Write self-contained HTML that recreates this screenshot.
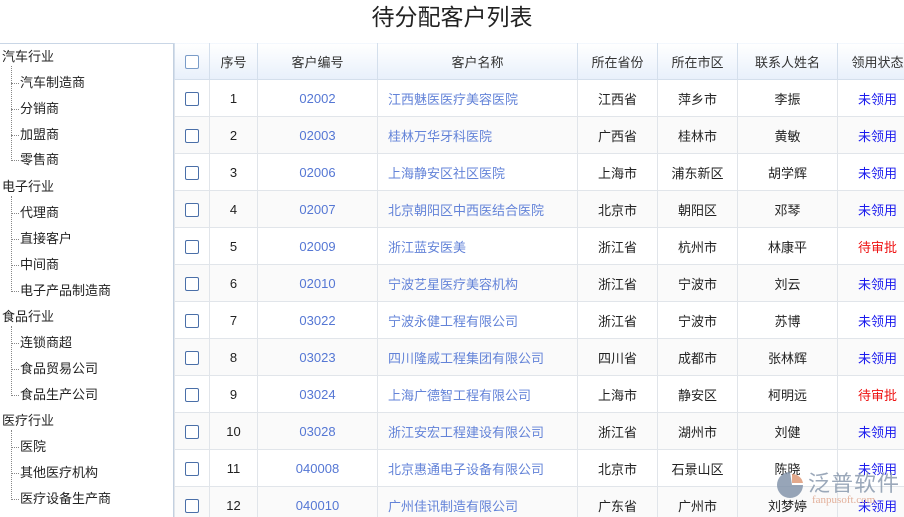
<!DOCTYPE html>
<html><head><meta charset="utf-8"><style>
*{margin:0;padding:0;box-sizing:border-box}
body{width:904px;height:517px;overflow:hidden;background:#fff;font-family:"Liberation Sans","Noto Sans CJK SC",sans-serif;font-size:13px;color:#222;position:relative}
.title{position:absolute;top:0;left:0;width:904px;text-align:center;font-size:23px;line-height:34px;color:#222}
.topline{position:absolute;top:43px;left:0;width:904px;height:1px;background:#c9d6e6}
.tree{position:absolute;left:0;top:44px;width:173px}
.t{position:absolute;white-space:nowrap;line-height:16px}
.vl{position:absolute;left:11px;border-left:1px dotted #888;width:0}
.hl{position:absolute;left:11px;width:8px;border-top:1px dotted #888;height:0}
.sep{position:absolute;left:173px;top:44px;width:1px;height:473px;background:#c3d0e0}
.wrap{position:absolute;left:174px;top:43px;width:730px;height:474px;overflow:hidden}
table{border-collapse:collapse;table-layout:fixed;width:743px;margin-top:-1px}
td,th{border:1px solid #e1e5ea;text-align:center;height:37px;padding:0;font-weight:normal;white-space:nowrap;overflow:hidden}
th{background:linear-gradient(#fff,#e8f0fb);border-color:#d4dfec;color:#333}
tr:nth-child(odd) td{background:#fafafa}
.cb{display:inline-block;width:14px;height:14px;border:1px solid #4a6fa8;border-radius:2px;vertical-align:middle;background:#fff}
th .cb{border-color:#7a9cc8}
.c{color:#5577d4}
.n{color:#6383d8;text-align:left;padding-left:10px}
.b{color:#1a1aee}
.r{color:#ee1111}
.logo{position:absolute;left:808px;top:466px;font-size:22px;color:#8a9aae;opacity:.85;letter-spacing:1px}
.logo2{position:absolute;left:812px;top:494px;font-size:11px;color:#e0a890;font-family:"Liberation Serif",serif;opacity:.9}
</style></head><body>
<div class="title">待分配客户列表</div>
<div class="topline"></div>
<div class="tree">
<div class="t" style="left:2px;top:5px">汽车行业</div>
<div class="vl" style="top:22px;height:95px"></div>
<div class="hl" style="top:39px"></div><div class="t" style="left:20px;top:31px">汽车制造商</div>
<div class="hl" style="top:65px"></div><div class="t" style="left:20px;top:57px">分销商</div>
<div class="hl" style="top:91px"></div><div class="t" style="left:20px;top:83px">加盟商</div>
<div class="hl" style="top:116px"></div><div class="t" style="left:20px;top:108px">零售商</div>
<div class="t" style="left:2px;top:135px">电子行业</div>
<div class="vl" style="top:152px;height:96px"></div>
<div class="hl" style="top:169px"></div><div class="t" style="left:20px;top:161px">代理商</div>
<div class="hl" style="top:195px"></div><div class="t" style="left:20px;top:187px">直接客户</div>
<div class="hl" style="top:221px"></div><div class="t" style="left:20px;top:213px">中间商</div>
<div class="hl" style="top:247px"></div><div class="t" style="left:20px;top:239px">电子产品制造商</div>
<div class="t" style="left:2px;top:265px">食品行业</div>
<div class="vl" style="top:282px;height:70px"></div>
<div class="hl" style="top:299px"></div><div class="t" style="left:20px;top:291px">连锁商超</div>
<div class="hl" style="top:325px"></div><div class="t" style="left:20px;top:317px">食品贸易公司</div>
<div class="hl" style="top:351px"></div><div class="t" style="left:20px;top:343px">食品生产公司</div>
<div class="t" style="left:2px;top:369px">医疗行业</div>
<div class="vl" style="top:386px;height:70px"></div>
<div class="hl" style="top:403px"></div><div class="t" style="left:20px;top:395px">医院</div>
<div class="hl" style="top:429px"></div><div class="t" style="left:20px;top:421px">其他医疗机构</div>
<div class="hl" style="top:455px"></div><div class="t" style="left:20px;top:447px">医疗设备生产商</div>
</div>
<div class="sep"></div>
<div class="wrap">
<table>
<colgroup><col style="width:35px"><col style="width:48px"><col style="width:120px"><col style="width:200px"><col style="width:80px"><col style="width:80px"><col style="width:100px"><col style="width:80px"></colgroup>
<tr><th><span class="cb"></span></th><th>序号</th><th>客户编号</th><th>客户名称</th><th>所在省份</th><th>所在市区</th><th>联系人姓名</th><th>领用状态</th></tr>
<tr><td><span class="cb"></span></td><td>1</td><td class="c">02002</td><td class="n">江西魅医医疗美容医院</td><td>江西省</td><td>萍乡市</td><td>李振</td><td class="b">未领用</td></tr>
<tr><td><span class="cb"></span></td><td>2</td><td class="c">02003</td><td class="n">桂林万华牙科医院</td><td>广西省</td><td>桂林市</td><td>黄敏</td><td class="b">未领用</td></tr>
<tr><td><span class="cb"></span></td><td>3</td><td class="c">02006</td><td class="n">上海静安区社区医院</td><td>上海市</td><td>浦东新区</td><td>胡学辉</td><td class="b">未领用</td></tr>
<tr><td><span class="cb"></span></td><td>4</td><td class="c">02007</td><td class="n">北京朝阳区中西医结合医院</td><td>北京市</td><td>朝阳区</td><td>邓琴</td><td class="b">未领用</td></tr>
<tr><td><span class="cb"></span></td><td>5</td><td class="c">02009</td><td class="n">浙江蓝安医美</td><td>浙江省</td><td>杭州市</td><td>林康平</td><td class="r">待审批</td></tr>
<tr><td><span class="cb"></span></td><td>6</td><td class="c">02010</td><td class="n">宁波艺星医疗美容机构</td><td>浙江省</td><td>宁波市</td><td>刘云</td><td class="b">未领用</td></tr>
<tr><td><span class="cb"></span></td><td>7</td><td class="c">03022</td><td class="n">宁波永健工程有限公司</td><td>浙江省</td><td>宁波市</td><td>苏博</td><td class="b">未领用</td></tr>
<tr><td><span class="cb"></span></td><td>8</td><td class="c">03023</td><td class="n">四川隆威工程集团有限公司</td><td>四川省</td><td>成都市</td><td>张林辉</td><td class="b">未领用</td></tr>
<tr><td><span class="cb"></span></td><td>9</td><td class="c">03024</td><td class="n">上海广德智工程有限公司</td><td>上海市</td><td>静安区</td><td>柯明远</td><td class="r">待审批</td></tr>
<tr><td><span class="cb"></span></td><td>10</td><td class="c">03028</td><td class="n">浙江安宏工程建设有限公司</td><td>浙江省</td><td>湖州市</td><td>刘健</td><td class="b">未领用</td></tr>
<tr><td><span class="cb"></span></td><td>11</td><td class="c">040008</td><td class="n">北京惠通电子设备有限公司</td><td>北京市</td><td>石景山区</td><td>陈晓</td><td class="b">未领用</td></tr>
<tr><td><span class="cb"></span></td><td>12</td><td class="c">040010</td><td class="n">广州佳讯制造有限公司</td><td>广东省</td><td>广州市</td><td>刘梦婷</td><td class="b">未领用</td></tr>
</table>
</div>
<svg style="position:absolute;left:774px;top:470px" width="32" height="30" viewBox="0 0 32 30"><path d="M16 2 A13 13 0 1 0 29 15 L18 15 Z" fill="#7d8ea6" opacity=".8"/><path d="M18 4 A11 11 0 0 1 29 13 L18 13 Z" fill="#e0a080" opacity=".9"/></svg>
<div class="logo">泛普软件</div>
<div class="logo2">fanpusoft.com</div>
</body></html>
